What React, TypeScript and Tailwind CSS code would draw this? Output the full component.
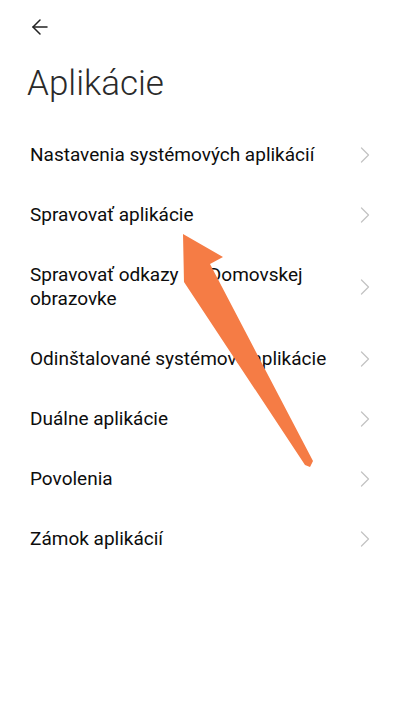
import React from 'react';
import { ArrowLeft, ChevronRight } from 'lucide-react';

const items = [
  'Nastavenia systémových aplikácií',
  'Spravovať aplikácie',
  'Spravovať odkazy na Domovskej obrazovke',
  'Odinštalované systémové aplikácie',
  'Duálne aplikácie',
  'Povolenia',
  'Zámok aplikácií',
];

const Row: React.FC<{ label: string }> = ({ label }) => (
  <div className="flex items-center justify-between py-[18px] pl-[30px] pr-[21px]">
    <span className="text-[19px] leading-[24px] font-normal text-[#0d0d0d] max-w-[310px]">{label}</span>
    <ChevronRight className="w-[28px] h-[28px] -my-[2px] text-[#c4c4c4] shrink-0" strokeWidth={1.1} />
  </div>
);

export default function App() {
  return (
    <div
      className="relative w-[400px] h-[713px] bg-white overflow-hidden"
      style={{ fontFamily: 'Roboto, "Noto Sans", sans-serif' }}
    >
      <div className="pt-[15px] pl-[28px]">
        <ArrowLeft className="w-[24px] h-[24px] text-[#222]" strokeWidth={1.5} />
      </div>
      <h1 className="pl-[27px] mt-[23px] text-[35px] leading-[44px] font-light text-[#2a2a2a]">Aplikácie</h1>
      <div className="mt-[19px]">
        {items.map((label) => (
          <Row key={label} label={label} />
        ))}
      </div>
      <svg className="absolute inset-0 pointer-events-none" width="400" height="713" viewBox="0 0 400 713">
        <polygon
          points="183,234 223,257 210,264 313,461 310,467 305,465 184,282"
          fill="#f57c45"
        />
      </svg>
    </div>
  );
}
